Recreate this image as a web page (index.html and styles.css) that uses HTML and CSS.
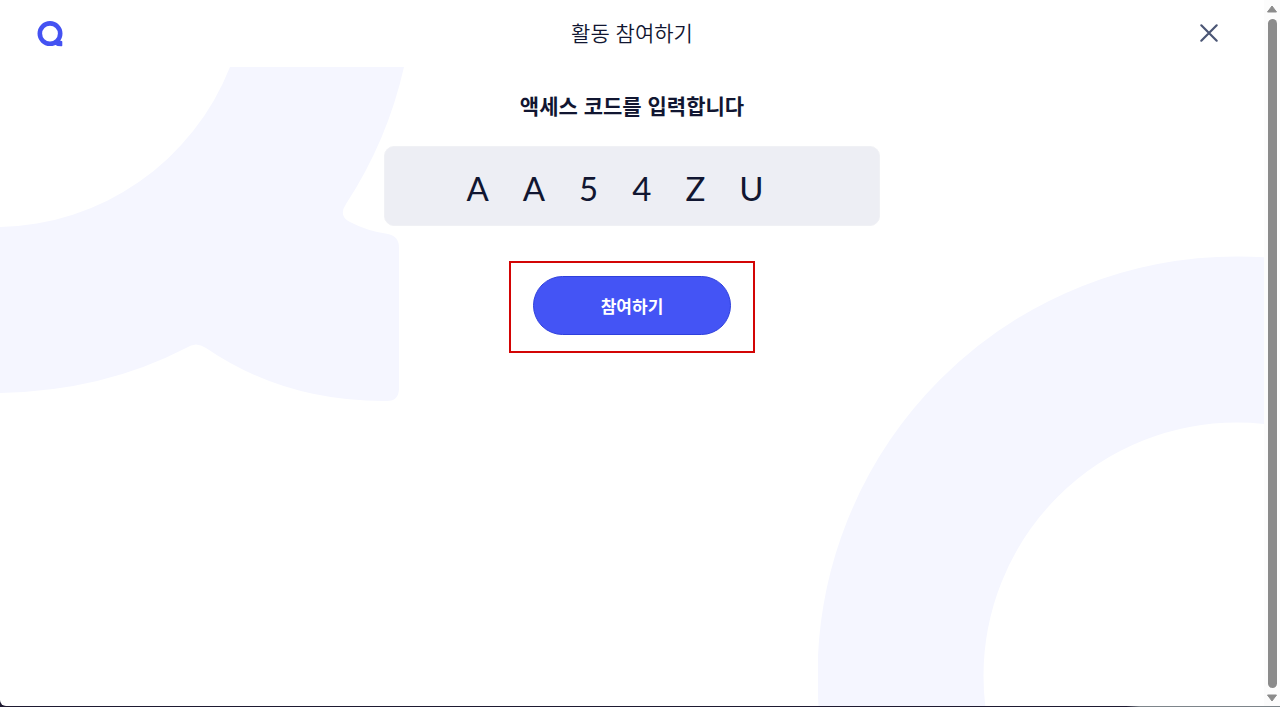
FILE: index.html
```html
<!DOCTYPE html>
<html lang="ko">
<head>
<meta charset="utf-8">
<meta name="viewport" content="width=device-width, initial-scale=1">
<title>활동 참여하기</title>
<link rel="stylesheet" href="styles.css">
</head>
<body>
<div class="window">
  <div class="page">
    <header class="header">
      <a class="logo" href="#" aria-label="홈">
        <svg width="26" height="26" viewBox="0 0 26 26" aria-hidden="true">
          <circle cx="13" cy="12.6" r="10.2" fill="none" stroke="#4452f2" stroke-width="4.6"/>
          <path d="M16 21.5 L21.5 18.3 Q23 19.8 24.6 20 Q25.3 20.1 25.3 20.8 V24.6 Q25.3 25.3 24.6 25.3 Q20.5 25.4 17.5 23.4Z" fill="#4452f2"/>
        </svg>
      </a>
      <h1 class="title">활동 참여하기</h1>
      <button class="close" type="button" aria-label="닫기">
        <svg width="20" height="20" viewBox="0 0 20 20" aria-hidden="true">
          <path d="M2.3 2.3 17.7 17.7M17.7 2.3 2.3 17.7" stroke="#4b5675" stroke-width="2.2" stroke-linecap="round"/>
        </svg>
      </button>
    </header>
    <main class="main">
      <svg class="shape shape-left" width="410" height="340" viewBox="0 67 410 340" aria-hidden="true">
        <path fill="#f5f6ff" d="M0 227 A253 253 0 0 0 230 67 H404 A419 419 0 0 1 346 204 Q338 216 350 222 Q367 231 388 234 Q399 236 399 248 V388 Q399 401 387 401 Q285 402 206 348 Q196 341 186 348 Q103 391 0 393Z"/>
      </svg>
      <svg class="shape shape-right" width="446" height="451" viewBox="818 255 446 451" aria-hidden="true">
        <circle cx="1237" cy="676" r="336.5" fill="none" stroke="#f5f6ff" stroke-width="166"/>
      </svg>
      <form class="form">
        <label class="label" for="code">액세스 코드를 입력합니다</label>
        <input class="code" id="code" type="text" value="AA54ZU" maxlength="6" autocomplete="off" spellcheck="false">
        <div class="highlight">
          <button class="join" type="button">참여하기</button>
        </div>
      </form>
    </main>
  </div>
  <div class="scrollbar" aria-hidden="true">
    <svg width="12" height="8" viewBox="0 0 12 8"><path d="M6 1 10.5 7H1.5Z" fill="#8b8b8b" stroke="#8b8b8b" stroke-linejoin="round"/></svg>
    <div class="thumb"></div>
    <svg width="12" height="8" viewBox="0 0 12 8"><path d="M6 7 10.5 1H1.5Z" fill="#8b8b8b" stroke="#8b8b8b" stroke-linejoin="round"/></svg>
  </div>
</div>
</body>
</html>
```
FILE: styles.css
```css
* {
  box-sizing: border-box;
}

body {
  margin: 0;
  min-height: 100vh;
  padding-bottom: 1px;
  display: flex;
  background: linear-gradient(90deg, #1e1a31 88%, #7e858b 89%);
  color: #111631;
  font-family: "Noto Sans CJK KR", sans-serif;
}

.window {
  flex: 1;
  display: flex;
  background: #fff;
  border-radius: 0 0 0 6px;
  overflow: hidden;
}

.page {
  flex: 1;
  display: flex;
  flex-direction: column;
}

.header {
  display: grid;
  grid-template-columns: 1fr auto 1fr;
  align-items: center;
  height: 67px;
  padding: 0 37px;
}

.logo {
  display: flex;
}

.title {
  margin: 0;
  padding-bottom: 3px;
  font-size: 21px;
  font-weight: 350;
  line-height: 32px;
}

.close {
  justify-self: end;
  display: flex;
  padding: 7px 8px 8px;
  border: 0;
  background: none;
}

.main {
  position: relative;
  flex: 1;
  padding: 22px 16px;
}

.shape {
  position: absolute;
}

.shape-left {
  top: 0;
  left: 0;
}

.shape-right {
  right: 0;
  bottom: 0;
}

.form {
  position: relative;
  display: flex;
  flex-direction: column;
  align-items: center;
}

.label {
  font-size: 21px;
  font-weight: 700;
  line-height: 32px;
}

.code {
  width: 100%;
  max-width: 496px;
  height: 80px;
  margin-top: 25px;
  padding: 3px 16px 0;
  border: 1px solid #f0f1f5;
  border-radius: 10px;
  background: #edeef4;
  color: #111631;
  font-family: Lato, sans-serif;
  font-size: 33px;
  font-weight: 400;
  letter-spacing: 34px;
  text-align: center;
}

.highlight {
  margin-top: 35px;
  padding: 13px 22px 16px;
  border: 2px solid #d30505;
}

.join {
  display: block;
  height: 59px;
  padding: 0 67px;
  border: 1px solid #2f40dc;
  border-radius: 30px;
  background: #4454f5;
  color: #fff;
  font-family: inherit;
  font-size: 17px;
  font-weight: 700;
}

.scrollbar {
  width: 16px;
  display: flex;
  flex-direction: column;
  align-items: center;
  gap: 6px;
  padding: 5px 0 4px;
  background: #fcfcfc;
}

.thumb {
  flex: 1;
  width: 9px;
  border-radius: 5px;
  background: #8b8b8b;
}
```
